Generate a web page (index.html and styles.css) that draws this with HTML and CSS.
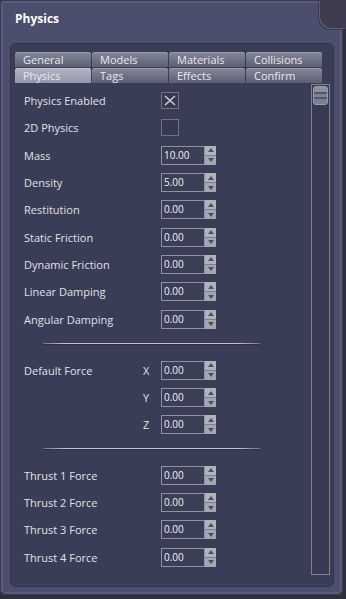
FILE: index.html
```html
<!DOCTYPE html>
<html lang="en">
    <head>
        <title>Physics</title>
        <meta charset="UTF-8">
        <link rel="stylesheet" href="styles.css">
    </head>
    <body>
        <div class="notch"></div>
        <div class="window">
            <h1 class="title">Physics</h1>

            <div class="panel">
                <div class="tabs">
                    <div class="tab">General</div>
                    <div class="tab">Models</div>
                    <div class="tab">Materials</div>
                    <div class="tab">Collisions</div>
                    <div class="tab selected">Physics</div>
                    <div class="tab">Tags</div>
                    <div class="tab">Effects</div>
                    <div class="tab">Confirm</div>
                </div>

                <div class="content">
                    <div class="form">
                        <div class="row">
                            <span class="label">Physics Enabled</span>
                            <span class="check">
                                <svg width="16" height="15" viewBox="0 0 16 15"><path d="M3 3L13 12M13 3L3 12" stroke="#c9cbd6" stroke-width="1.6" fill="none"/></svg>
                            </span>
                        </div>
                        <div class="row">
                            <span class="label">2D Physics</span>
                            <span class="check"></span>
                        </div>
                        <div class="row">
                            <span class="label">Mass</span>
                            <span class="spin"><span class="field">10.00</span><span class="arrows"><i class="up"></i><i class="down"></i></span></span>
                        </div>
                        <div class="row">
                            <span class="label">Density</span>
                            <span class="spin"><span class="field">5.00</span><span class="arrows"><i class="up"></i><i class="down"></i></span></span>
                        </div>
                        <div class="row">
                            <span class="label">Restitution</span>
                            <span class="spin"><span class="field">0.00</span><span class="arrows"><i class="up"></i><i class="down"></i></span></span>
                        </div>
                        <div class="row">
                            <span class="label">Static Friction</span>
                            <span class="spin"><span class="field">0.00</span><span class="arrows"><i class="up"></i><i class="down"></i></span></span>
                        </div>
                        <div class="row">
                            <span class="label">Dynamic Friction</span>
                            <span class="spin"><span class="field">0.00</span><span class="arrows"><i class="up"></i><i class="down"></i></span></span>
                        </div>
                        <div class="row">
                            <span class="label">Linear Damping</span>
                            <span class="spin"><span class="field">0.00</span><span class="arrows"><i class="up"></i><i class="down"></i></span></span>
                        </div>
                        <div class="row">
                            <span class="label">Angular Damping</span>
                            <span class="spin"><span class="field">0.00</span><span class="arrows"><i class="up"></i><i class="down"></i></span></span>
                        </div>

                        <div class="sep first"></div>

                        <div class="row">
                            <span class="label short">Default Force</span>
                            <span class="axis">X</span>
                            <span class="spin"><span class="field">0.00</span><span class="arrows"><i class="up"></i><i class="down"></i></span></span>
                        </div>
                        <div class="row">
                            <span class="label short"></span>
                            <span class="axis">Y</span>
                            <span class="spin"><span class="field">0.00</span><span class="arrows"><i class="up"></i><i class="down"></i></span></span>
                        </div>
                        <div class="row">
                            <span class="label short"></span>
                            <span class="axis">Z</span>
                            <span class="spin"><span class="field">0.00</span><span class="arrows"><i class="up"></i><i class="down"></i></span></span>
                        </div>

                        <div class="sep second"></div>

                        <div class="row">
                            <span class="label">Thrust 1 Force</span>
                            <span class="spin"><span class="field">0.00</span><span class="arrows"><i class="up"></i><i class="down"></i></span></span>
                        </div>
                        <div class="row">
                            <span class="label">Thrust 2 Force</span>
                            <span class="spin"><span class="field">0.00</span><span class="arrows"><i class="up"></i><i class="down"></i></span></span>
                        </div>
                        <div class="row">
                            <span class="label">Thrust 3 Force</span>
                            <span class="spin"><span class="field">0.00</span><span class="arrows"><i class="up"></i><i class="down"></i></span></span>
                        </div>
                        <div class="row">
                            <span class="label">Thrust 4 Force</span>
                            <span class="spin"><span class="field">0.00</span><span class="arrows"><i class="up"></i><i class="down"></i></span></span>
                        </div>
                    </div>

                    <div class="scrollbar">
                        <div class="thumb"></div>
                    </div>
                </div>
            </div>
        </div>
    </body>
</html>
```

FILE: styles.css
```css
html, body {
    margin: 0;
    font-family: "Open Sans", "DejaVu Sans", sans-serif;
}
body {
    position: relative;
    width: 346px;
    height: 599px;
    background: #2f2f3c;
    overflow: hidden;
}

.window {
    width: 343px;
    height: 595px;
    box-sizing: border-box;
    background: #4b4e6d;
    border-radius: 4px 0 6px 6px;
    box-shadow: inset 0 0 0 1px #393b52, inset 0 0 0 3px #585b7c;
    padding-top: 10px;
}
.notch {
    position: absolute;
    top: 0;
    right: 0;
    width: 26px;
    height: 28px;
    background: #3e3b4f;
    border-bottom-left-radius: 12px;
    box-shadow: -1px 1px 0 #5a5d7e, -2px 2px 0 #383a50;
    z-index: 1;
}

.title {
    margin: 0 0 16px 15px;
    font-size: 12px;
    line-height: 17px;
    font-weight: bold;
    color: #ffffff;
}

.panel {
    margin-left: 10px;
    width: 324px;
    height: 544px;
    box-sizing: border-box;
    background: #3a3d56;
    border: 1px solid #32344a;
    border-radius: 5px;
}

.tabs {
    display: grid;
    grid-template-columns: repeat(4, 76px);
    grid-auto-rows: 15px;
    gap: 1px 1px;
    margin: 8px 0 0 4px;
}
.tab {
    padding-left: 8px;
    border-radius: 3px 3px 0 0;
    background: linear-gradient(#858899, #5c5f72);
    box-shadow: inset 0 1px 0 #9a9cac;
    color: #e8e9ef;
    font-size: 11px;
    line-height: 15px;
}
.tab.selected {
    background: linear-gradient(#b2b5c4, #9396a8);
    box-shadow: inset 0 1px 0 #c4c6d2;
}

.content {
    display: flex;
    margin-top: 1px;
}
.form {
    width: 300px;
    box-sizing: border-box;
    padding: 3px 0 0 13px;
}
.scrollbar {
    width: 19px;
    height: 491px;
    box-sizing: border-box;
    border: 1px solid #7e8193;
    background: #383b53;
    padding: 1px;
}
.thumb {
    height: 19px;
    border-radius: 3px;
    border: 1px solid #9b9dad;
    box-sizing: border-box;
    background: linear-gradient(#8c8fa0 0, #8c8fa0 5px, #55586b 5px, #55586b 7px, #7f8294 7px, #7f8294 10px, #55586b 10px, #55586b 12px, #7b7e90 12px);
}

.row {
    display: flex;
    align-items: center;
    height: 27.3px;
}
.label {
    width: 137px;
    color: #e0e1e8;
    font-size: 11px;
}
.label.short {
    width: 119px;
}
.axis {
    width: 18px;
    color: #e0e1e8;
    font-size: 11px;
}

.check {
    display: flex;
    align-items: center;
    justify-content: center;
    width: 18px;
    height: 17px;
    box-sizing: border-box;
    border: 1px solid #707386;
    background: #363950;
}

.spin {
    display: flex;
    height: 19px;
}
.field {
    width: 44px;
    box-sizing: border-box;
    border: 1px solid #8e91a0;
    background: #3b3e57;
    color: #f2f2f4;
    font-size: 10px;
    line-height: 17px;
    padding-left: 2px;
}
.arrows {
    display: flex;
    flex-direction: column;
    width: 11px;
    background: #a4a6b2;
}
.arrows i {
    flex: 1;
    display: flex;
    align-items: center;
    justify-content: center;
}
.arrows i::after {
    content: "";
    border-left: 3px solid transparent;
    border-right: 3px solid transparent;
}
.arrows .up {
    background: #b0b2bd;
    border-bottom: 1px solid #7d8090;
}
.arrows .up::after {
    border-bottom: 4px solid #4e5060;
}
.arrows .down::after {
    border-top: 4px solid #4e5060;
}

.sep {
    height: 1px;
    width: 217px;
    margin-left: 19px;
    background: linear-gradient(90deg, rgba(190,192,206,0.4), #c2c4d2 10%, #c2c4d2 90%, rgba(190,192,206,0.4));
    box-shadow: 0 1px 0 #2e3046;
}
.sep.first {
    margin-top: 10px;
    margin-bottom: 13px;
}
.sep.second {
    margin-top: 9px;
    margin-bottom: 13px;
}
```
